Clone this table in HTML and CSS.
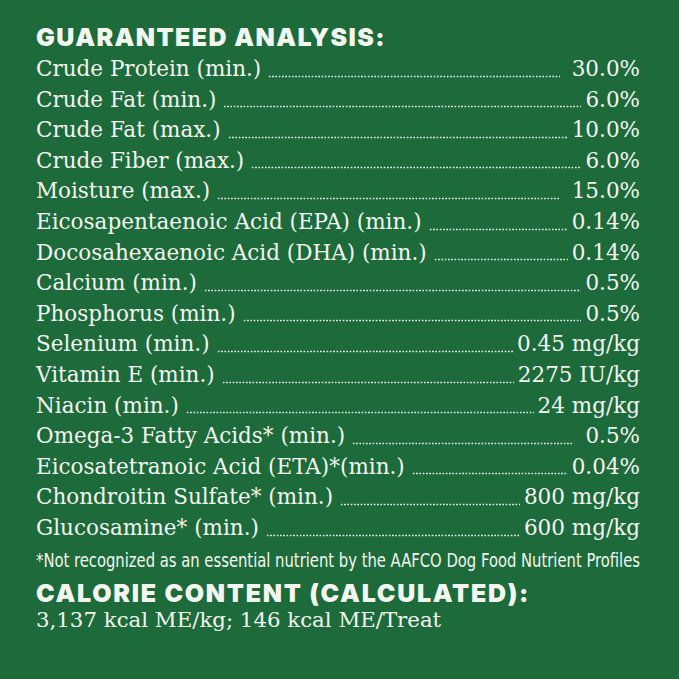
FILE: index.html
```html
<!DOCTYPE html>
<html>
<head>
<meta charset="utf-8">
<link rel="stylesheet" href="styles.css">
</head>
<body>
<div class="panel">
  <h1 class="heading">GUARANTEED ANALYSIS:</h1>
  <div class="rows">
    <div class="row"><span class="label">Crude Protein (min.)</span><span class="leader wide"></span><span class="value">30.0%</span></div>
    <div class="row"><span class="label">Crude Fat (min.)</span><span class="leader"></span><span class="value">6.0%</span></div>
    <div class="row"><span class="label">Crude Fat (max.)</span><span class="leader"></span><span class="value">10.0%</span></div>
    <div class="row"><span class="label">Crude Fiber (max.)</span><span class="leader"></span><span class="value">6.0%</span></div>
    <div class="row"><span class="label">Moisture (max.)</span><span class="leader wide"></span><span class="value">15.0%</span></div>
    <div class="row"><span class="label">Eicosapentaenoic Acid (EPA) (min.)</span><span class="leader"></span><span class="value">0.14%</span></div>
    <div class="row"><span class="label">Docosahexaenoic Acid (DHA) (min.)</span><span class="leader"></span><span class="value">0.14%</span></div>
    <div class="row"><span class="label">Calcium (min.)</span><span class="leader"></span><span class="value">0.5%</span></div>
    <div class="row"><span class="label">Phosphorus (min.)</span><span class="leader"></span><span class="value">0.5%</span></div>
    <div class="row"><span class="label">Selenium (min.)</span><span class="leader"></span><span class="value">0.45 mg/kg</span></div>
    <div class="row"><span class="label">Vitamin E (min.)</span><span class="leader"></span><span class="value">2275 IU/kg</span></div>
    <div class="row"><span class="label">Niacin (min.)</span><span class="leader"></span><span class="value">24 mg/kg</span></div>
    <div class="row"><span class="label">Omega-3 Fatty Acids* (min.)</span><span class="leader wide"></span><span class="value">0.5%</span></div>
    <div class="row"><span class="label">Eicosatetranoic Acid (ETA)*(min.)</span><span class="leader"></span><span class="value">0.04%</span></div>
    <div class="row"><span class="label">Chondroitin Sulfate* (min.)</span><span class="leader"></span><span class="value">800 mg/kg</span></div>
    <div class="row"><span class="label">Glucosamine* (min.)</span><span class="leader"></span><span class="value">600 mg/kg</span></div>
  </div>
  <p class="note"><span class="note-text">*Not recognized as an essential nutrient by the AAFCO Dog Food Nutrient Profiles</span></p>
  <h2 class="heading calorie">CALORIE CONTENT (CALCULATED):</h2>
  <p class="kcal">3,137 kcal ME/kg; 146 kcal ME/Treat</p>
</div>
</body>
</html>
```

FILE: styles.css
```css
html, body {
  margin: 0;
  padding: 0;
}
body {
  width: 679px;
  height: 679px;
  background: #1d6a3b;
  color: #f3f6f0;
  overflow: hidden;
}
.panel {
  padding: 23px 39px 0 36px;
}
.heading {
  margin: 0;
  font-family: Inter, "Noto Sans", sans-serif;
  font-weight: 900;
  font-size: 25px;
  line-height: 28px;
  letter-spacing: 1.4px;
}
.rows {
  margin-top: 3px;
}
.row {
  display: flex;
  height: 30.6px;
  line-height: 30.6px;
  font-family: "DejaVu Serif", serif;
  font-size: 21.5px;
  font-weight: 400;
  white-space: nowrap;
}
.leader {
  flex: 1;
  margin: 0 4px 0 7px;
  background-image: radial-gradient(circle, #f3f6f0 0.85px, transparent 1.15px);
  background-size: 3.3px 3px;
  background-repeat: repeat-x;
  background-position: 0 calc(100% - 7px);
}
.leader.wide {
  margin-right: 12px;
}
.note {
  margin: 4px 0 0;
  height: 24px;
  line-height: 24px;
  font-family: "DejaVu Sans Condensed", "DejaVu Sans", sans-serif;
  font-size: 19px;
  white-space: nowrap;
  overflow: hidden;
}
.note-text {
  display: inline-block;
  transform: scaleX(0.865);
  transform-origin: left center;
}
.calorie {
  margin-top: 7px;
  letter-spacing: 1.7px;
}
.kcal {
  margin: 0;
  font-family: "DejaVu Serif", serif;
  font-size: 21.3px;
  line-height: 26px;
}
```
